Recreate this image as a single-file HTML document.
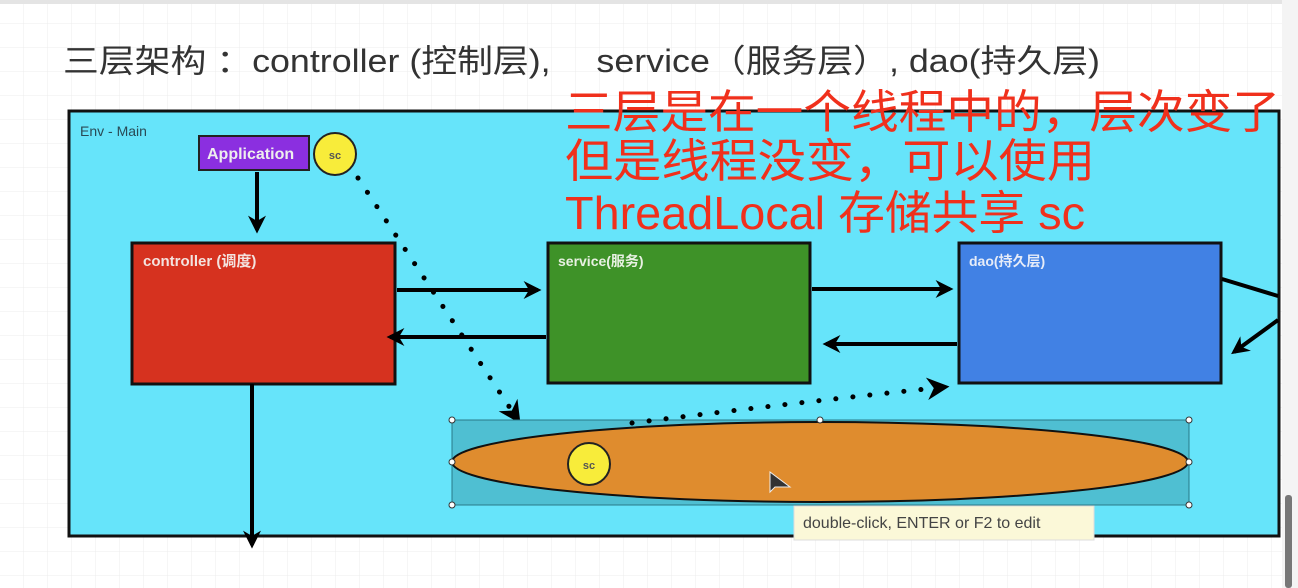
<!DOCTYPE html>
<html><head><meta charset="utf-8"><style>
html,body{margin:0;padding:0;width:1298px;height:588px;overflow:hidden;background:#fff}
svg{display:block}
</style></head><body>
<svg width="1298" height="588" xmlns="http://www.w3.org/2000/svg">
<defs>
<pattern id="g" width="24" height="24" patternUnits="userSpaceOnUse"><path d="M24 0V24M0 24H24" stroke="#ececec" stroke-width="1" fill="none"/></pattern>
<marker id="ah" viewBox="0 0 10 10" refX="8" refY="5" markerWidth="4.5" markerHeight="4.5" orient="auto"><path d="M0 0L10 5L0 10L3 5Z" fill="#000"/></marker>
</defs>
<rect width="1298" height="588" fill="url(#g)"/>
<rect width="1298" height="4" fill="#e4e4e4"/>
<rect x="1282" y="0" width="16" height="588" fill="#f4f4f4"/>
<rect x="1285" y="495" width="7" height="93" rx="3" fill="#777"/>
<text x="63" y="72" font-family="Liberation Sans,Noto Sans CJK SC,sans-serif" font-size="32" fill="#333" textLength="1037" lengthAdjust="spacingAndGlyphs">三层架构 ：controller (控制层),　 service（服务层）, dao(持久层)</text>
<rect x="69" y="111" width="1210" height="425" fill="#66e4fa" stroke="#111" stroke-width="3"/>
<text x="80" y="136" font-family="Liberation Sans,sans-serif" font-size="14" fill="#2a4a55">Env - Main</text>
<rect x="199" y="136" width="110" height="34" fill="#8b2fe0" stroke="#222" stroke-width="2"/>
<text x="207" y="159" font-family="Liberation Sans,sans-serif" font-size="16" font-weight="bold" fill="#eee">Application</text>
<circle cx="335" cy="154" r="21" fill="#f8ec3a" stroke="#222" stroke-width="2"/>
<text x="335" y="159" text-anchor="middle" font-family="Liberation Sans,sans-serif" font-size="11" font-weight="bold" fill="#555">sc</text>
<line x1="257" y1="172" x2="257" y2="230" stroke="#000" stroke-width="4" marker-end="url(#ah)"/>
<rect x="132" y="243" width="263" height="141" fill="#d6321f" stroke="#111" stroke-width="3"/>
<text x="143" y="266" font-family="Liberation Sans,Noto Sans CJK SC,sans-serif" font-size="15" font-weight="bold" fill="#f3e3df">controller (调度)</text>
<rect x="548" y="243" width="262" height="140" fill="#3e9228" stroke="#111" stroke-width="3"/>
<text x="558" y="266" font-family="Liberation Sans,Noto Sans CJK SC,sans-serif" font-size="14" font-weight="bold" fill="#e8f1e2">service(服务)</text>
<rect x="959" y="243" width="262" height="140" fill="#4181e4" stroke="#111" stroke-width="3"/>
<text x="969" y="266" font-family="Liberation Sans,Noto Sans CJK SC,sans-serif" font-size="14" font-weight="bold" fill="#e6ecf8">dao(持久层)</text>
<line x1="397" y1="290" x2="538" y2="290" stroke="#000" stroke-width="4" marker-end="url(#ah)"/>
<line x1="546" y1="337" x2="390" y2="337" stroke="#000" stroke-width="4" marker-end="url(#ah)"/>
<line x1="812" y1="289" x2="950" y2="289" stroke="#000" stroke-width="4" marker-end="url(#ah)"/>
<line x1="957" y1="344" x2="826" y2="344" stroke="#000" stroke-width="4" marker-end="url(#ah)"/>
<line x1="1222" y1="279" x2="1278" y2="296" stroke="#000" stroke-width="4"/>
<line x1="1278" y1="320" x2="1234" y2="352" stroke="#000" stroke-width="4" marker-end="url(#ah)"/>
<line x1="252" y1="384" x2="252" y2="545" stroke="#000" stroke-width="4" marker-end="url(#ah)"/>
<path d="M358 178 L518 420" stroke="#000" stroke-width="5" stroke-dasharray="0.1 17" stroke-linecap="round" fill="none" marker-end="url(#ah)"/>
<rect x="452" y="420" width="737" height="85" fill="#4fbfd2" stroke="#2a7a88" stroke-width="1"/>
<ellipse cx="820" cy="462" rx="368" ry="40" fill="#df8c2e" stroke="#111" stroke-width="2"/>
<path d="M632 423 Q800 402 945 387" stroke="#000" stroke-width="5" stroke-dasharray="0.1 17" stroke-linecap="round" fill="none" marker-end="url(#ah)"/>
<g fill="#fff" stroke="#333" stroke-width="1"><circle cx="452" cy="420" r="3"/><circle cx="820" cy="420" r="3"/><circle cx="1189" cy="420" r="3"/><circle cx="452" cy="462" r="3"/><circle cx="1189" cy="462" r="3"/><circle cx="452" cy="505" r="3"/><circle cx="1189" cy="505" r="3"/></g>
<circle cx="589" cy="464" r="21" fill="#f8ec3a" stroke="#222" stroke-width="2"/>
<text x="589" y="469" text-anchor="middle" font-family="Liberation Sans,sans-serif" font-size="11" font-weight="bold" fill="#555">sc</text>
<path d="M770 472 L770 492 L775 487 L790 487 Z" fill="#333" stroke="#eee" stroke-width="1"/>
<rect x="794" y="506" width="300" height="34" fill="#fbf8d8" stroke="#ddd"/>
<text x="803" y="528" font-family="Liberation Sans,sans-serif" font-size="16" fill="#444">double-click, ENTER or F2 to edit</text>
<g font-family="Liberation Sans,Noto Sans CJK SC,sans-serif" font-size="46" fill="#f0301c">
<text x="565" y="128" textLength="715" lengthAdjust="spacingAndGlyphs">三层是在一个线程中的，层次变了</text>
<text x="565" y="177" textLength="530" lengthAdjust="spacingAndGlyphs">但是线程没变，可以使用</text>
<text x="565" y="229" textLength="520" lengthAdjust="spacingAndGlyphs">ThreadLocal 存储共享 sc</text>
</g>
</svg>
</body></html>
